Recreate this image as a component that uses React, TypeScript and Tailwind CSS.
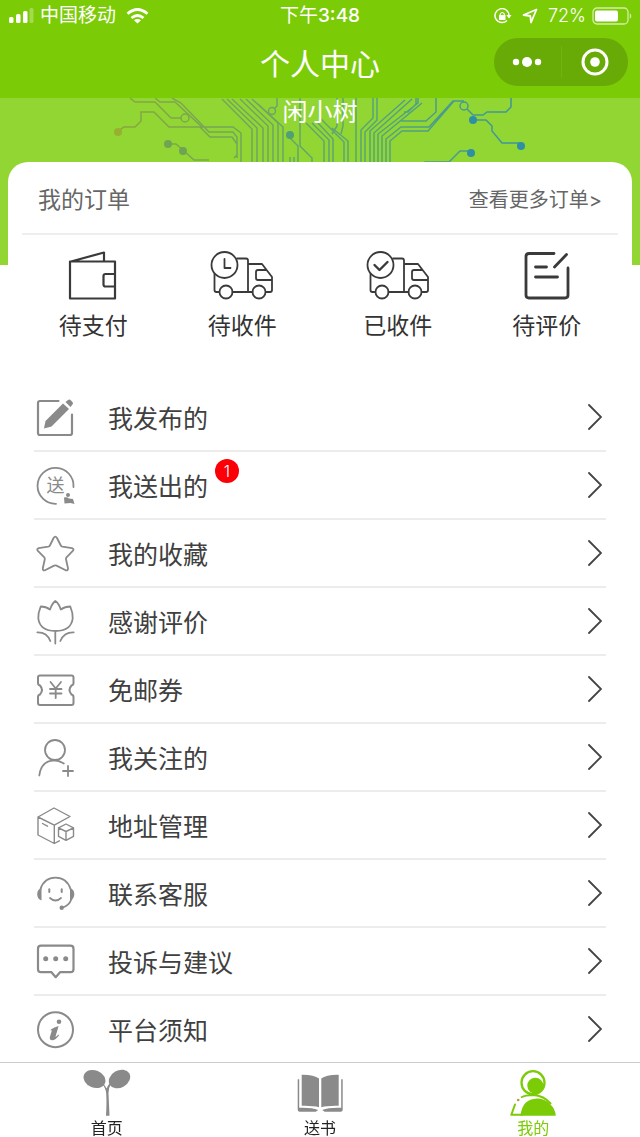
import { ReactNode } from 'react';

interface Order {
  label: string;
  icon: ReactNode;
}

interface MenuItem {
  label: string;
  icon: ReactNode;
  badge?: number;
}

interface Tab {
  label: string;
  icon: ReactNode;
  active?: boolean;
}

function Truck({ children }: { children: ReactNode }) {
  return (
    <svg className="h-[50px] w-16" viewBox="0 0 64 50" fill="none" stroke="#3a3a3a" strokeWidth="1.800" strokeLinecap="round" strokeLinejoin="round">
      <circle cx="14.500" cy="14" r="13" />
      {children}
      <path d="M27 7.500h9q2 0 2 2v31.500M4.500 23v16q0 2 2 2h2M22.500 41h20M38 13h14l10 13v13q0 2-2 2h-4M61 29H48q-2 0-2-2v-6q0-2 2-2h8.500" />
      <circle cx="16" cy="41" r="6.500" />
      <circle cx="49" cy="41" r="6.500" />
    </svg>
  );
}

const orders: Order[] = [
  {
    label: '待支付',
    icon: (
      <svg className="h-[50px] w-16" viewBox="0 0 64 50" fill="none" stroke="#3a3a3a" strokeWidth="2.200" strokeLinejoin="round">
        <path d="M9 10.500h45v37H9zM10 10.500l33-9v9M54 23H44.500q-2 0-2 2v8.500q0 2 2 2H54" />
      </svg>
    ),
  },
  {
    label: '待收件',
    icon: (
      <Truck>
        <path d="M14.500 8v9h6" />
      </Truck>
    ),
  },
  {
    label: '已收件',
    icon: (
      <Truck>
        <path d="M8.500 14l5 5 8-8" strokeWidth="2.400" />
      </Truck>
    ),
  },
  {
    label: '待评价',
    icon: (
      <svg className="h-[50px] w-16" viewBox="0 0 64 50" fill="none" stroke="#3a3a3a" strokeWidth="2.800" strokeLinecap="round" strokeLinejoin="round">
        <path d="M39 2.500H14q-3 0-3 3V44q0 3 3 3h36q3 0 3-3V17M51.500 3.500L39.500 16M20.500 16h11M20.500 26h22" />
      </svg>
    ),
  },
];

const menu: MenuItem[] = [
  {
    label: '我发布的',
    icon: (
      <>
        <path d="M22.500 8H4q-2 0-2 2v30q0 2 2 2h30q2 0 2-2V21.500" strokeWidth="2.200" />
        <path d="M8 35.500l1.500-7.500L27 10.500l6 5.500-17.500 17.500z" fill="#8a8a8a" stroke="none" />
        <path d="M29.500 9l2.500-2q1.500-1 3 .5l1.500 1.500q1 1.500 0 2.500L34.500 14z" fill="#8a8a8a" stroke="none" />
      </>
    ),
  },
  {
    label: '我送出的',
    badge: 1,
    icon: (
      <>
        <path d="M37.500 26A18 18 0 1 0 20 42.800" />
        <text x="19.500" y="30.500" textAnchor="middle" fontSize="18" fill="#8a8a8a" stroke="none">
          送
        </text>
        <circle cx="32" cy="34" r="2" fill="#8a8a8a" stroke="none" />
        <path d="M28 36.500q3-1 5 1l4 .5 1.500 5-4-1-6 .5z" fill="#8a8a8a" stroke="none" />
      </>
    ),
  },
  {
    label: '我的收藏',
    icon: (
      <path d="M17.600 9q1.700-2.600 3.400 0l3.800 7.500q.5 1 1.600 1.200l9.600 1.400q2.500.7.800 2.800l-6.300 6.500q-.7.800-.5 1.800l2 9q.2 2.800-2.300 2.100l-9.200-4.700q-1.200-.6-2.400 0l-9.100 4.700q-2.400.7-2.200-2.100l2-9q.2-1-.5-1.800L1.900 21.900q-1.600-2.100.8-2.800l9.600-1.400q1.100-.2 1.600-1.200z" />
    ),
  },
  {
    label: '感谢评价',
    icon: (
      <path d="M14 12.500Q16 6.500 19.300 4q3.700 2.500 5.500 8.500M14 12.500Q10 9.500 4.700 9.500 2 16 2.300 21.500 4 34 19.500 34t17.200-12.500Q37 16 34.300 9.500q-5.300 0-9.500 3M19.300 34v12.500M1.300 35.300Q11 35 14.300 44M37.700 35.300Q28 35 24.300 44" />
    ),
  },
  {
    label: '免邮券',
    icon: (
      <>
        <path d="M4 10.500h31.500q2 0 2 2V18q0 2-2 2.500-4 4.500 0 9 2 .5 2 2.500v6q0 2-2 2H4q-2 0-2-2v-6q0-2 2-2.500 4-4.500 0-9-2-.5-2-2.500v-5.500q0-2 2-2z" strokeWidth="2" />
        <path d="M14.500 17l5.200 6.500L25 17M19.700 23.500V33M14 24h11.500M14 28.500h11.500" />
      </>
    ),
  },
  {
    label: '我关注的',
    icon: (
      <>
        <circle cx="19" cy="17" r="10" />
        <path d="M3.300 42.500Q5 28 18 27.300q5 0 9.800 3.200M32 33v10M27 38h10" />
      </>
    ),
  },
  {
    label: '地址管理',
    icon: (
      <path d="M18 7l16 8.500-15.700 8.700L2 16zM2 16v18l16.300 8.500V24.200M18.300 42.500l5-2.700M6.500 22.500l5 2.700M30 23l7.500 3.800v8.500L30 39.300l-7.500-4v-8.500zM22.500 26.800L30 30.500l7.500-3.700M30 30.500v8.800" strokeWidth="1.400" />
    ),
  },
  {
    label: '联系客服',
    icon: (
      <>
        <path d="M4.500 20C7 12.500 12.500 8.700 19.500 8.700S32 12.500 34.500 20M35.500 30q-2.500 7-9.500 8.700" />
        <path d="M5.500 19v12.500Q1.200 30 1.200 25.200T5.500 19zM34 19v12.500q4.300-1.500 4.300-6.300T34 19z" fill="#8a8a8a" stroke="none" />
        <circle cx="25.700" cy="38.700" r="2.200" fill="#8a8a8a" stroke="none" />
        <path d="M13.300 20.300v2.800M25.700 20.300v2.800" strokeWidth="2" />
        <path d="M14 29q5.500 5 11 0" />
      </>
    ),
  },
  {
    label: '投诉与建议',
    icon: (
      <>
        <path d="M5 8.700h29.500q3 0 3 3v20.500q0 3-3 3H24l-4.300 5-4.200-5H5q-3 0-3-3V11.700q0-3 3-3z" strokeWidth="2.200" />
        <g fill="#8a8a8a" stroke="none">
          <circle cx="9.700" cy="21.700" r="2.500" />
          <circle cx="19.700" cy="21.700" r="2.500" />
          <circle cx="29.700" cy="21.700" r="2.500" />
        </g>
      </>
    ),
  },
  {
    label: '平台须知',
    icon: (
      <>
        <circle cx="19.500" cy="24.700" r="17.500" strokeWidth="2" />
        <circle cx="23" cy="16.700" r="2.300" fill="#8a8a8a" stroke="none" />
        <path d="M14.800 24.500q3.500-2.500 7.800-3.500l-3.200 11q1.600-.8 2.900-2.500l.8.800q-3.500 5-6.900 5-3.200-.3-2.200-3.800l2-6.500-1.300.7z" fill="#8a8a8a" stroke="none" />
      </>
    ),
  },
];

const tabs: Tab[] = [
  {
    label: '首页',
    icon: (
      <>
        <ellipse cx="11.500" cy="10" rx="11.300" ry="8.600" transform="rotate(22 11.500 10)" />
        <ellipse cx="36.500" cy="10" rx="11.300" ry="8.600" transform="rotate(-30 36.500 10)" />
        <path d="M20 14q2 3 3.700 5.500 1-3 3.300-5.500l1 1q-2.500 3.500-2.500 9l1 22.800h-3.500q.8-13 .2-22Q23 19 19 15z" />
      </>
    ),
  },
  {
    label: '送书',
    icon: (
      <>
        <path d="M5.700 5.700Q18 5.500 23 9.500v28.800Q17 36.500 5.700 36.800zM42.700 5.700Q30 5.500 25.300 9.500v28.800Q31 36.500 42.700 36.800z" />
        <path d="M1.700 10.300h1.500v28.500q12-.5 19 2.200l-2.500 1.700h-16q-2 0-2-2zM46.700 10.300h-1.500v28.500q-12-.5-19 2.200l2.500 1.700h16q2 0 2-2z" />
      </>
    ),
  },
  {
    label: '我的',
    active: true,
    icon: (
      <>
        <circle cx="24" cy="13.700" r="11.500" fill="none" stroke="#7ccb07" strokeWidth="2.300" />
        <circle cx="26.300" cy="16.700" r="8" />
        <path d="M11.500 46.800Q13 30 28 29.500q8 0 13 5.500 5.500 5 5.700 11.800z" />
        <path d="M12 28.500q4.500-2.500 12-2.500 11 .5 18 9" fill="none" stroke="#7ccb07" strokeWidth="2" />
        <path d="M6 35.500L2.300 45.800H13" fill="none" stroke="#7ccb07" strokeWidth="2" strokeLinecap="round" strokeLinejoin="round" />
        <circle cx="9.200" cy="31" r="1.300" fill="#b89a3c" />
      </>
    ),
  },
];

// Circuit-board tree behind the nickname
function CircuitTree() {
  return (
    <svg className="h-full w-full" viewBox="0 0 640 167" preserveAspectRatio="xMidYMin slice" fill="none" stroke="url(#circuit)" strokeWidth="1.500">
      <defs>
        <linearGradient id="circuit" gradientUnits="userSpaceOnUse" x1="110" y1="0" x2="530" y2="0">
          <stop offset="0" stopColor="#8ba63a" />
          <stop offset="0.35" stopColor="#6fa562" />
          <stop offset="0.6" stopColor="#58a577" />
          <stop offset="1" stopColor="#3b93a0" />
        </linearGradient>
      </defs>
      {/* Left branches */}
      <path d="M118 33l6-4h11l6-6V14h13l15 15h31l10 10h22l5 7v14M130 0l5 4h20l16 16h11M155 0l5 4h15l27 25h31l8 6v32M172 0l9 5 28 29h24l4 5v18l-3 3M168 46h8l7 6 11 10h15" />
      {/* Trunk */}
      <path d="M222 1l30 30v36M227 1l30 29v37M232 1l31 29v37M240 1l28 27v39M246 1l27 26v40M252 1l26 24v42M258 6l25 23v38M277 0v8l-3 3M290 40l8 8v19M300 15v33l12 12v7M290 59v8M294 59v8M300 0v20" />
      <path d="M306 25l18 18v24M312 25l17 17v25M318 25l15 16v26M320 20l24 24v23M332 30l16 13v24M337 0v28l-5 8M343 0v28l-2 8M356 0v67M361 67V32l12-12V0M365 67V34l12-12V0M370 67V33l35-31M374 67V35l38-34M378 67V36l40-31V0M382 67V38l40-33M386 67V41l15-12h28l24-26h11M390 67V43l12-10h26l26-30M416 0v6l-8 8h-4M436 0v14l-10 9h-25" />
      {/* Right branches */}
      <path d="M421 67l4-3h24l11-11h11M464 8l9 9h10l4-3h19l5-5V0M473 22h13l6 6v5l10 12h19" />
      <circle cx="185" cy="20" r="4" fill="#92d634" />
      <circle cx="272" cy="13" r="3.500" />
      <circle cx="464" cy="8" r="4" fill="#92d634" />
      <g stroke="none">
        <circle cx="118" cy="34" r="4" fill="#98b02f" />
        <circle cx="168" cy="46" r="4" fill="#6fa552" />
        <circle cx="183" cy="53" r="4" fill="#6fa552" />
        <circle cx="290" cy="37" r="4" fill="#4f9f77" />
        <circle cx="471" cy="55" r="4" fill="#2f8fa3" />
        <circle cx="473" cy="22" r="4" fill="#2f8fa3" />
        <circle cx="521" cy="48" r="4" fill="#2f8fa3" />
      </g>
    </svg>
  );
}

function StatusBar() {
  return (
    <div className="grid h-8 grid-cols-[1fr_auto_1fr] items-center px-2 font-[Inter,'Noto_Sans_CJK_SC',sans-serif] text-white">
      <div className="flex items-center gap-1.5">
        <svg className="h-4 w-[26px]" viewBox="0 0 26 16" fill="currentColor">
          <rect x="1" y="9" width="4.500" height="6" rx="1.500" />
          <rect x="8" y="6" width="4.500" height="9" rx="1.500" />
          <rect x="15" y="3" width="4.500" height="12" rx="1.500" />
          <rect x="21.500" y="0" width="4" height="15" rx="1.500" opacity="0.3" />
        </svg>
        <span className="text-[19px] leading-6">中国移动</span>
        <svg className="ml-1 h-4 w-6" viewBox="0 0 24 16" fill="none" stroke="currentColor" strokeWidth="2.800">
          <path d="M1.500 5.800q10-8.500 20 0M5.500 10q6-5 12 0" />
          <path d="M11.500 15.500l-3.500-3.300q3.500-2.500 7 0z" fill="currentColor" stroke="none" />
        </svg>
      </div>
      <span className="text-[19px] leading-6">
        下午<span className="font-medium">3:48</span>
      </span>
      <div className="flex items-center justify-end gap-1.5">
        <svg className="h-4 w-[18px]" viewBox="0 0 18 16" fill="none" stroke="currentColor" strokeWidth="1.500">
          <path d="M13 12.500A7 7 0 1 1 15 7.500" />
          <path d="M12.300 7h5.200L15 10.500z" fill="currentColor" stroke="none" />
          <rect x="5" y="7" width="6.500" height="5" rx="0.500" fill="currentColor" stroke="none" />
          <path d="M6.300 7.500V6q2-3 4 0v1.500" strokeWidth="1.200" />
        </svg>
        <svg className="mx-1 h-4 w-4" viewBox="0 0 16 16" fill="none" stroke="currentColor" strokeWidth="1.800" strokeLinejoin="round">
          <path d="M14.500 1.500L1.500 7l6.800 1 .7 6.500z" />
        </svg>
        <span className="text-[18px] leading-6 font-light">72%</span>
        <svg className="h-[18px] w-10" viewBox="0 0 40 18" fill="none">
          <rect x="1" y="1" width="35" height="16" rx="4" stroke="#d3eea6" strokeWidth="1.300" />
          <rect x="3" y="3.500" width="23" height="11" rx="2" fill="currentColor" />
          <path d="M37.800 6v6q3-3 0-6z" fill="#d3eea6" />
        </svg>
      </div>
    </div>
  );
}

export default function App() {
  return (
    <div className="flex min-h-screen flex-col bg-white font-['Noto_Sans_CJK_SC',sans-serif] text-[#404040]">
      <header className="bg-[#7ccb07]">
        <StatusBar />
        <div className="grid h-[66px] grid-cols-[1fr_auto_1fr] items-center px-3 pb-1.5">
          <h1 className="col-start-2 text-[30px] leading-10 text-white">个人中心</h1>
          <div className="flex h-12 w-[134px] items-center justify-self-end rounded-full bg-[#68ab06]">
            <button type="button" aria-label="更多" className="flex h-full flex-1 items-center justify-center">
              <svg className="h-3 w-8" viewBox="0 0 32 12" fill="#fff">
                <circle cx="5" cy="6" r="3.200" />
                <circle cx="16" cy="6" r="5" />
                <circle cx="27" cy="6" r="3.200" />
              </svg>
            </button>
            <span className="h-8 w-px bg-[#74b214]" />
            <button type="button" aria-label="关闭" className="flex h-full flex-1 items-center justify-center">
              <svg className="h-7 w-7" viewBox="0 0 28 28" fill="none">
                <circle cx="14" cy="14" r="12" stroke="#fff" strokeWidth="3" />
                <circle cx="14" cy="14" r="4.800" fill="#fff" />
              </svg>
            </button>
          </div>
        </div>
      </header>

      <main className="flex-1">
        {/* Banner */}
        <div className="relative h-[167px] bg-[#92d634]">
          <div className="absolute inset-0">
            <CircuitTree />
          </div>
          <p className="relative text-center text-[25px] leading-6 text-white">闲小树</p>
        </div>

        {/* Orders */}
        <section className="relative mx-2 -mt-[103px] rounded-t-[20px] bg-white px-3.5">
          <div className="flex h-[73px] items-center justify-between border-b-2 border-[#eeeeee] px-4 text-[#666666]">
            <h2 className="text-[23px] leading-8">我的订单</h2>
            <a href="#orders" className="pt-1 text-[20px] leading-8">
              查看更多订单<span className="font-[Inter,sans-serif]">&gt;</span>
            </a>
          </div>
          <div className="grid grid-cols-[143fr_156fr_156fr_143fr] pt-4">
            {orders.map((order) => (
              <a key={order.label} href="#orders" className="flex flex-col items-center gap-[7px] text-[#333333]">
                {order.icon}
                <span className="text-[23px] leading-8">{order.label}</span>
              </a>
            ))}
          </div>
        </section>

        {/* Menu */}
        <ul className="mx-[34px] mt-11">
          {menu.map((item) => (
            <li key={item.label} className="border-b-2 border-[#ececec] last:border-b-0">
              <a href="#menu" className="flex h-[66px] items-center gap-8 pr-1 pl-0.5">
                <svg className="h-12 w-10 shrink-0" viewBox="0 0 40 48" fill="none" stroke="#8a8a8a" strokeWidth="1.800" strokeLinecap="round" strokeLinejoin="round">
                  {item.icon}
                </svg>
                <span className="relative text-[25px] leading-9">
                  {item.label}
                  {item.badge && (
                    <span className="absolute -top-2 left-full ml-[7px] flex h-6 w-6 items-center justify-center rounded-full bg-[#fb0007] font-[Inter,sans-serif] text-base font-light text-white">
                      {item.badge}
                    </span>
                  )}
                </span>
                <svg className="ml-auto h-7 w-4" viewBox="0 0 16 28" fill="none" stroke="#444" strokeWidth="1.800" strokeLinecap="round">
                  <path d="M3 2L15 14 3 26" />
                </svg>
              </a>
            </li>
          ))}
        </ul>
      </main>

      {/* Tab bar */}
      <nav className="sticky bottom-0 grid h-[75px] grid-cols-3 border-t border-[#cccccc] bg-white">
        {tabs.map((tab) => (
          <a
            key={tab.label}
            href="#tab"
            className={`flex flex-col items-center pt-[6px] text-base leading-5 ${
              tab.active ? 'text-[#7ccb07]' : 'text-[#222222]'
            }`}
          >
            <svg className="h-12 w-12 shrink-0" viewBox="0 0 48 48" fill={tab.active ? '#7ccb07' : '#8a8a8a'}>
              {tab.icon}
            </svg>
            {tab.label}
          </a>
        ))}
      </nav>
    </div>
  );
}
